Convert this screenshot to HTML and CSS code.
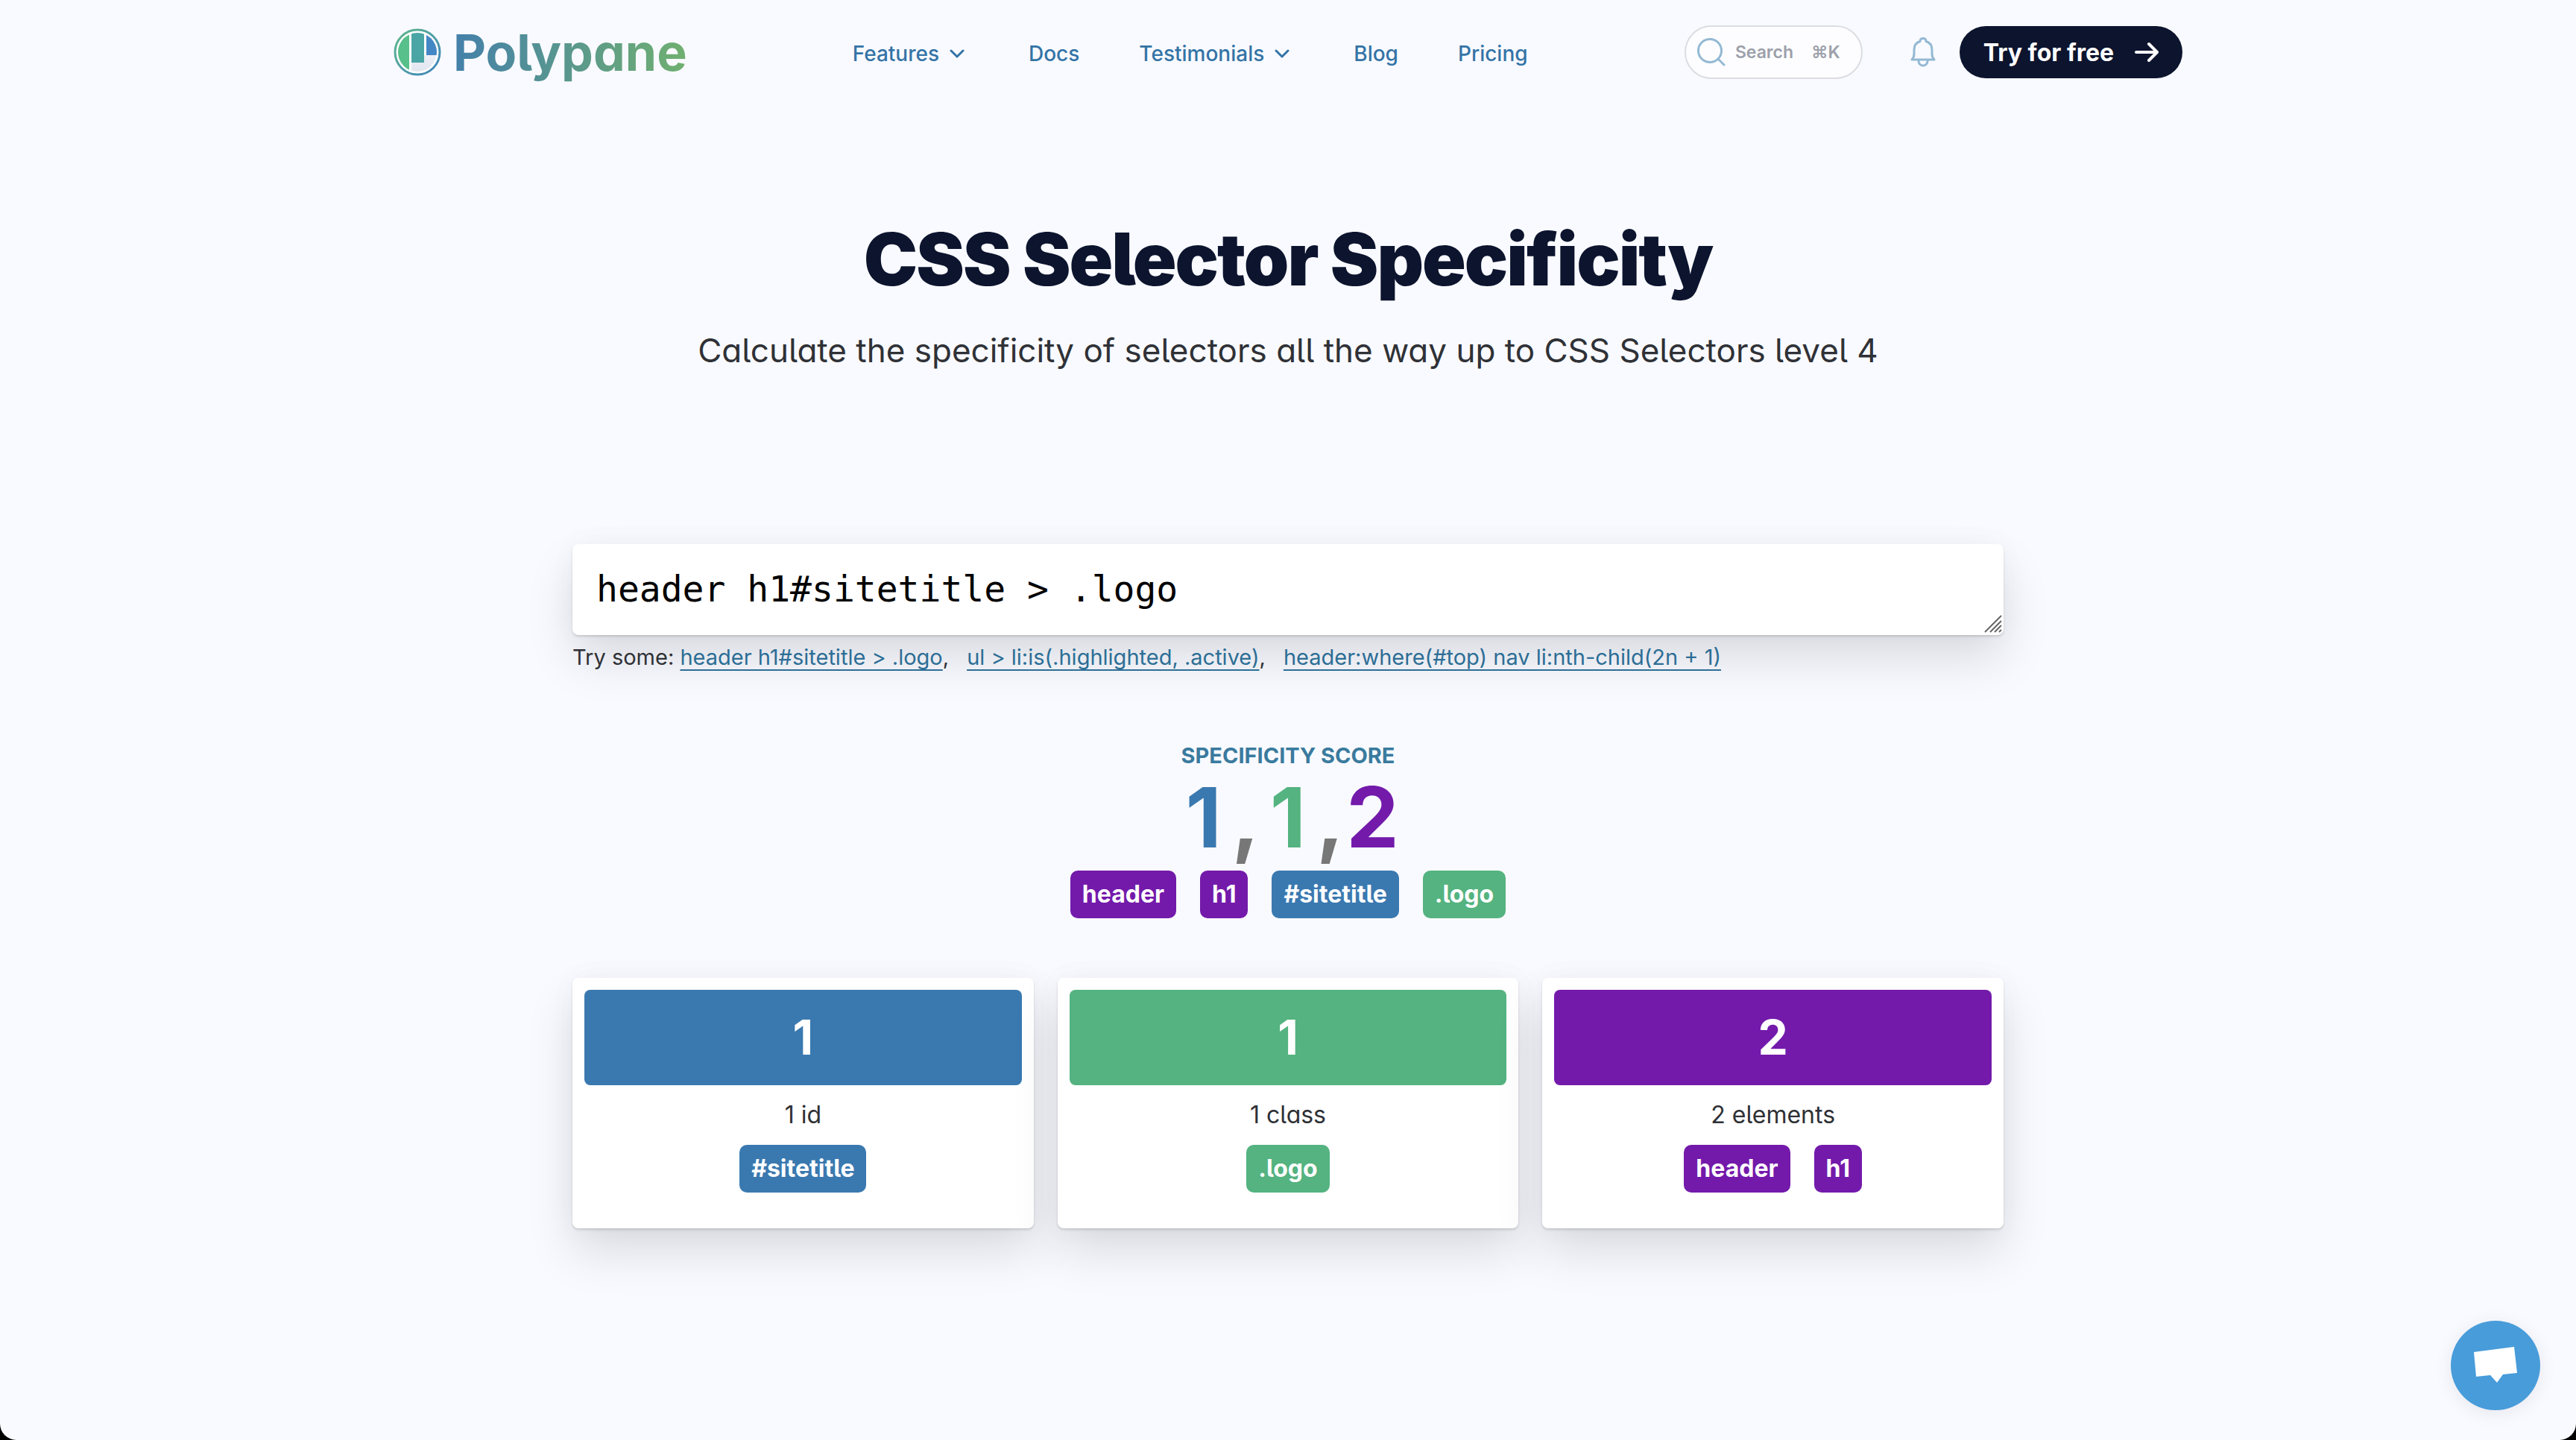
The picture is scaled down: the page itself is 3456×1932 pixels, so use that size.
FILE: index.html
```html
<!DOCTYPE html>
<html lang="en">
<head>
<meta charset="utf-8">
<meta name="viewport" content="width=device-width, initial-scale=1">
<title>CSS Selector Specificity | Polypane</title>
<link rel="stylesheet" href="styles.css">
</head>
<body>
<div class="page">
  <header class="site-header">
    <a class="logo" href="#">
      <svg class="logo-mark" viewBox="0 0 64 64" aria-hidden="true">
        <defs>
          <linearGradient id="ring" x1="0" y1="0" x2="1" y2="1"><stop offset="0" stop-color="#5fb98a"/><stop offset="1" stop-color="#3f83bf"/></linearGradient>
          <linearGradient id="disc" x1="0" y1="0" x2="0" y2="1"><stop offset="0" stop-color="#ffffff"/><stop offset="1" stop-color="#dfe3ee"/></linearGradient>
          <clipPath id="inner"><circle cx="32" cy="32" r="26"/></clipPath>
        </defs>
        <circle cx="32" cy="32" r="30" fill="#fff" stroke="url(#ring)" stroke-width="3"/>
        <g clip-path="url(#inner)">
          <rect width="64" height="64" fill="url(#disc)"/>
          <rect x="0" y="0" width="21" height="64" fill="#57c08b"/>
          <rect x="21" y="0" width="3" height="64" fill="#fff"/>
          <rect x="24" y="0" width="17" height="46" fill="#4aa5a5"/>
          <rect x="41" y="0" width="3" height="37" fill="#fff"/>
          <rect x="44" y="0" width="20" height="36" fill="#4487c4"/>
        </g>
      </svg>
      <span class="logo-name">Polypane</span>
    </a>
    <nav class="main-nav" aria-label="Main">
      <a href="#">Features <svg class="chevron" viewBox="0 0 20 12" aria-hidden="true"><path d="M2 2l8 8 8-8"/></svg></a>
      <a href="#">Docs</a>
      <a href="#">Testimonials <svg class="chevron" viewBox="0 0 20 12" aria-hidden="true"><path d="M2 2l8 8 8-8"/></svg></a>
      <a href="#">Blog</a>
      <a href="#">Pricing</a>
    </nav>
    <div class="actions">
      <button class="search" type="button">
        <svg viewBox="0 0 40 40" aria-hidden="true"><circle cx="18" cy="18" r="15.500"/><path d="M29 29l8 8"/></svg>
        <span>Search</span><span class="keys">⌘K</span>
      </button>
      <button class="bell" type="button" aria-label="Notifications">
        <svg viewBox="0 0 34 40" aria-hidden="true"><path d="M2 30c2-2 3-4 3-8v-5C5 11 8 7 13 5.500C13 3 14.500 1.500 17 1.500S21 3 21 5.500C26 7 29 11 29 17v5c0 4 1 6 3 8zM11 30v2a6 6 0 0 0 12 0v-2"/></svg>
      </button>
      <a class="cta" href="#">Try for free
        <svg viewBox="0 0 32 28" aria-hidden="true"><path d="M2 14h27M19 3l11 11-11 11"/></svg>
      </a>
    </div>
  </header>

  <main class="main">
    <h1 class="title">CSS Selector Specificity</h1>
    <p class="subtitle">Calculate the specificity of selectors all the way up to CSS Selectors level 4</p>

    <div class="field">
      <textarea class="selector-input" rows="1" aria-label="Selector" spellcheck="false">header h1#sitetitle &gt; .logo</textarea>
      <svg class="grip" viewBox="0 0 24 24" aria-hidden="true"><path d="M1 23L23 1M8 23L23 8M14 23l9-9M20 23l3-3"/></svg>
    </div>
    <p class="examples">
      <span>Try some: <a href="#">header h1#sitetitle &gt; .logo</a>,</span>
      <span><a href="#">ul &gt; li:is(.highlighted, .active)</a>,</span>
      <span><a href="#">header:where(#top) nav li:nth-child(2n + 1)</a></span>
    </p>

    <section class="score">
      <h2 class="score-label">Specificity score</h2>
      <p class="score-value"><span class="digit id">1</span><span class="comma">,</span><span class="digit class">1</span><span class="comma">,</span><span class="digit element">2</span></p>
      <div class="tags">
        <span class="tag tag-element">header</span>
        <span class="tag tag-element">h1</span>
        <span class="tag tag-id">#sitetitle</span>
        <span class="tag tag-class">.logo</span>
      </div>
    </section>

    <section class="cards">
      <article class="card">
        <strong class="count tag-id">1</strong>
        <p class="kind">1 id</p>
        <div class="tags"><span class="tag tag-id">#sitetitle</span></div>
      </article>
      <article class="card">
        <strong class="count tag-class">1</strong>
        <p class="kind">1 class</p>
        <div class="tags"><span class="tag tag-class">.logo</span></div>
      </article>
      <article class="card">
        <strong class="count tag-element">2</strong>
        <p class="kind">2 elements</p>
        <div class="tags"><span class="tag tag-element">header</span><span class="tag tag-element">h1</span></div>
      </article>
    </section>
  </main>

  <button class="chat" type="button" aria-label="Open chat">
    <svg viewBox="0 0 60 52" aria-hidden="true"><path d="M1 8L55 1l4 35-19 2-8 11-9-10-19 2z" fill="#fff"/></svg>
  </button>
</div>
</body>
</html>
```
FILE: styles.css
```css
:root {
  --blue: #3a79b0;
  --green: #54b380;
  --purple: #731aab;
  --navy: #0c142e;
  --ink: #2f3136;
  --shadow: 0 2px 3px rgba(0, 0, 0, .14), 0 0 40px rgba(0, 0, 0, .03), 0 32px 64px rgba(0, 0, 0, .12);
}

* { box-sizing: border-box; }

html { background: #000; }

body {
  margin: 0;
  font-family: Inter, "Liberation Sans", sans-serif;
  font-size: 32px;
  color: var(--ink);
}

h1, h2, p { margin: 0; }

button { font: inherit; cursor: pointer; }

.page {
  min-height: 100vh;
  background: #f9faff;
  border-radius: 0 0 22px 22px;
}

/* Header */
.site-header {
  display: flex;
  align-items: center;
  max-width: 2400px;
  height: 140px;
  margin: 0 auto;
}

.logo {
  display: flex;
  align-items: center;
  gap: 16px;
  text-decoration: none;
}

.logo-mark { width: 64px; height: 64px; }

.logo-name {
  font-size: 68px;
  font-weight: 700;
  line-height: 84px;
  font-feature-settings: "cv05", "cv11";
  color: transparent;
  background: linear-gradient(90deg, #4480aa, #70b070);
  background-clip: text;
}

.main-nav {
  display: flex;
  gap: 80px;
  margin: 0 auto 0 222px;
  padding-top: 4px;
}

.main-nav a {
  display: flex;
  align-items: center;
  gap: 14px;
  font-size: 28px;
  font-weight: 500;
  line-height: 40px;
  color: #3474a6;
  text-decoration: none;
}

.chevron {
  width: 20px;
  height: 12px;
  margin-right: 6px;
}

.chevron path {
  fill: none;
  stroke: currentColor;
  stroke-width: 3;
  stroke-linecap: round;
  stroke-linejoin: round;
}

.actions {
  display: flex;
  align-items: center;
}

.search {
  display: flex;
  align-items: center;
  gap: 12px;
  height: 72px;
  padding: 0 28px 0 14px;
  font-size: 23px;
  font-weight: 600;
  color: #9ca0aa;
  background: #fdfdff;
  border: 2px solid #dcdde2;
  border-radius: 36px;
}

.search svg { width: 40px; height: 40px; }

.search svg, .bell svg {
  fill: none;
  stroke: #93b9d3;
  stroke-width: 3;
  stroke-linecap: round;
  stroke-linejoin: round;
}

.keys { margin-left: 12px; }

.bell {
  display: flex;
  margin: 0 32px 0 64px;
  padding: 0;
  background: none;
  border: 0;
}

.bell svg { width: 34px; height: 40px; }

.cta {
  display: flex;
  align-items: center;
  gap: 28px;
  height: 70px;
  padding: 0 32px;
  font-size: 32px;
  font-weight: 700;
  color: #fff;
  text-decoration: none;
  background: var(--navy);
  border-radius: 36px;
}

.cta svg {
  width: 32px;
  height: 28px;
  fill: none;
  stroke: currentColor;
  stroke-width: 4;
  stroke-linecap: round;
  stroke-linejoin: round;
}

/* Content */
.main {
  max-width: 1920px;
  margin: 0 auto;
  padding: 152px 0 160px;
}

.title {
  font-size: 97px;
  font-weight: 900;
  line-height: 112px;
  text-align: center;
  letter-spacing: -2px;
  color: var(--navy);
  font-feature-settings: "cv05", "cv11";
}

.subtitle {
  margin-top: 34px;
  font-size: 44px;
  line-height: 64px;
  text-align: center;
  font-feature-settings: "cv05", "cv11";
}

.field {
  position: relative;
  display: flex;
  margin-top: 228px;
}

.selector-input {
  width: 100%;
  height: 122px;
  padding: 32px;
  font-family: "DejaVu Sans Mono", monospace;
  font-size: 48px;
  line-height: 56px;
  color: #000;
  background: #fff;
  border: 0;
  border-radius: 8px;
  outline: 0;
  box-shadow: var(--shadow);
  overflow: hidden;
  resize: none;
}

.grip {
  position: absolute;
  right: 2px;
  bottom: 3px;
  width: 24px;
  height: 24px;
  fill: none;
  stroke: #666;
  stroke-width: 2;
}

.examples {
  position: relative;
  display: flex;
  flex-wrap: wrap;
  gap: 0 24px;
  margin-top: 10px;
  font-size: 29px;
  line-height: 40px;
}

.examples a {
  color: #2c6e96;
  text-decoration-thickness: 2px;
  text-underline-offset: 6px;
}

.score { margin-top: 92px; text-align: center; }

.score-label {
  font-size: 29px;
  font-weight: 700;
  line-height: 40px;
  text-transform: uppercase;
  color: #3a7a9e;
}

.score-value {
  display: flex;
  justify-content: center;
  margin-bottom: 10px;
  font-size: 112px;
  font-weight: 700;
  line-height: 124px;
}

.digit { width: 76px; }

.score-value .id { color: var(--blue); }
.score-value .class { color: var(--green); }
.score-value .element { color: var(--purple); }
.score-value .comma { color: #777; }

.tags {
  display: flex;
  flex-wrap: wrap;
  justify-content: center;
  gap: 32px;
}

.tag {
  padding: 0 16px;
  font-weight: 700;
  line-height: 64px;
  font-feature-settings: "cv05";
  color: #fff;
  border-radius: 10px;
}

.tag-id { background: var(--blue); }
.tag-class { background: var(--green); }
.tag-element { background: var(--purple); }

.cards {
  display: grid;
  grid-template-columns: repeat(3, 1fr);
  gap: 32px;
  margin-top: 80px;
}

.card {
  padding: 16px 16px 48px;
  text-align: center;
  background: #fff;
  border-radius: 8px;
  box-shadow: var(--shadow);
}

.count {
  display: block;
  font-size: 64px;
  font-weight: 700;
  line-height: 128px;
  color: #fff;
  border-radius: 8px;
}

.kind {
  padding: 16px 0;
  line-height: 48px;
  font-feature-settings: "cv05", "cv11";
}

.chat {
  position: fixed;
  right: 48px;
  bottom: 40px;
  display: flex;
  align-items: center;
  justify-content: center;
  width: 120px;
  height: 120px;
  padding: 0;
  background: #489cda;
  border: 0;
  border-radius: 50%;
  box-shadow: 0 4px 24px rgba(0, 0, 0, .08);
}

.chat svg { width: 60px; height: 52px; }
```
